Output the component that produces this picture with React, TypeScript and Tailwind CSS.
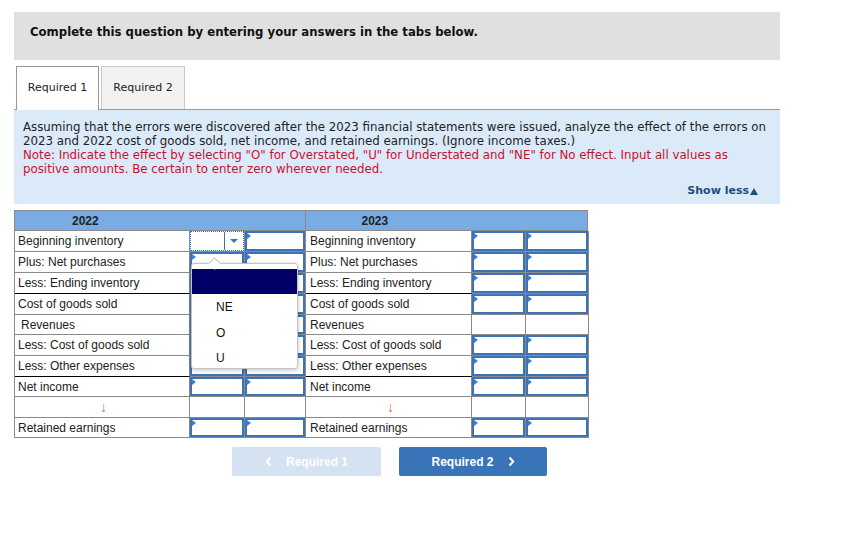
import React from "react";

const verdana = { fontFamily: '"DejaVu Sans", Verdana, sans-serif' };
const arial = { fontFamily: '"Liberation Sans", Arial, sans-serif' };

type Row = {
  left: string;
  right: string;
  h: string;
  leftInputs: boolean;
  rightInputs: boolean;
  blackBottom?: boolean;
  arrow?: boolean;
  indentLeft?: boolean;
};

const rows: Row[] = [
  { left: "Beginning inventory", right: "Beginning inventory", h: "h-[21px]", leftInputs: true, rightInputs: true },
  { left: "Plus: Net purchases", right: "Plus: Net purchases", h: "h-[21px]", leftInputs: true, rightInputs: true },
  { left: "Less: Ending inventory", right: "Less: Ending inventory", h: "h-[21px]", leftInputs: true, rightInputs: true, blackBottom: true },
  { left: "Cost of goods sold", right: "Cost of goods sold", h: "h-[21px]", leftInputs: true, rightInputs: true },
  { left: "Revenues", right: "Revenues", h: "h-[20px]", leftInputs: true, rightInputs: false, indentLeft: true },
  { left: "Less: Cost of goods sold", right: "Less: Cost of goods sold", h: "h-[21px]", leftInputs: true, rightInputs: true },
  { left: "Less: Other expenses", right: "Less: Other expenses", h: "h-[21px]", leftInputs: true, rightInputs: true, blackBottom: true },
  { left: "Net income", right: "Net income", h: "h-[20px]", leftInputs: true, rightInputs: true },
  { left: "", right: "", h: "h-[21px]", leftInputs: false, rightInputs: false, arrow: true },
  { left: "Retained earnings", right: "Retained earnings", h: "h-[20px]", leftInputs: true, rightInputs: true },
];

function Marker() {
  return (
    <span className="absolute left-0 top-0 h-0 w-0 border-y-[3px] border-l-[4px] border-y-transparent border-l-[#3b80d6]" />
  );
}

function InputBox() {
  return (
    <div className="relative h-full w-full border-2 border-[#3c72b6] bg-white">
      <Marker />
    </div>
  );
}

function SelectBox() {
  return (
    <div className="flex h-full w-full border border-dotted border-[#3c72b6] bg-white">
      <div className="flex-1" />
      <div className="flex w-[19px] items-center justify-center border-l border-[#3c72b6]">
        <span className="h-0 w-0 border-x-[4px] border-t-[4px] border-x-transparent border-t-[#3c72b6]" />
      </div>
    </div>
  );
}

function Cell({ w, children, className = "" }: { w: string; children?: React.ReactNode; className?: string }) {
  return (
    <div className={`${w} h-full shrink-0 border-r border-b border-[#8a8a8a] ${className}`}>
      {children}
    </div>
  );
}

function Chevron({ dir }: { dir: "left" | "right" }) {
  return (
    <svg width="7" height="11" viewBox="0 0 7 11" fill="none">
      <path
        d={dir === "left" ? "M5.5 1.5 L1.8 5.5 L5.5 9.5" : "M1.5 1.5 L5.2 5.5 L1.5 9.5"}
        stroke="white"
        strokeWidth="2"
      />
    </svg>
  );
}

function Dropdown() {
  return (
    <div
      className="absolute left-[176px] top-[52px] h-[106px] w-[107px] rounded-[3px] border border-[#c4c4c4] bg-white shadow-[0_1px_4px_rgba(0,0,0,0.25)]"
      style={arial}
    >
      <span className="absolute -top-[5px] left-[18px] h-[9px] w-[9px] rotate-45 border-l border-t border-[#c4c4c4] bg-white" />
      <div className="mt-[5px] h-[25px] bg-[#000066]" />
      <div className="flex h-[26px] items-center pl-[24px] text-[12px] text-[#111]">NE</div>
      <div className="flex h-[25px] items-center pl-[24px] text-[12px] text-[#111]">O</div>
      <div className="flex h-[25px] items-center pl-[24px] text-[12px] text-[#111]">U</div>
    </div>
  );
}

export default function App() {
  return (
    <div className="min-h-[537px] w-[866px] bg-white pl-[14px] pt-[12px]">
      <div className="h-[48px] w-[766px] bg-[#e0e0e0] pl-[16px] pt-[12px]">
        <p className="text-[11.7px] font-bold leading-[16px] text-[#111]" style={verdana}>
          Complete this question by entering your answers in the tabs below.
        </p>
      </div>

      <div className="mt-[6px] flex h-[44px] w-[766px] items-end border-b border-[#999]">
        <div
          className="-mb-px ml-[2px] flex h-[44px] w-[83px] items-center justify-center border border-b-0 border-[#999] bg-white text-[11px] text-[#222]"
          style={verdana}
        >
          Required 1
        </div>
        <div
          className="ml-[2px] flex h-[43px] w-[84px] items-center justify-center border border-b-0 border-[#c8c8c8] bg-[#f2f2f2] text-[11px] text-[#222]"
          style={verdana}
        >
          Required 2
        </div>
      </div>

      <div className="relative h-[94px] w-[766px] bg-[#dbeaf8] px-[9px] pt-[10px] text-[11.8px] leading-[14px]" style={verdana}>
        <p className="text-[#222]">
          Assuming that the errors were discovered after the 2023 financial statements were issued, analyze the effect of the errors on 2023 and 2022 cost of goods sold, net income, and retained earnings. (Ignore income taxes.)
        </p>
        <p className="text-[#c8102e]">
          Note: Indicate the effect by selecting "O" for Overstated, "U" for Understated and "NE" for No effect. Input all values as
          <br />
          positive amounts. Be certain to enter zero wherever needed.
        </p>
        <div className="absolute bottom-[6px] right-[22px] flex items-center text-[11px] font-bold text-[#1f4e7a]">
          Show less
          <span className="ml-[1px] h-0 w-0 border-x-[4px] border-b-[7px] border-x-transparent border-b-[#1f4e7a]" />
        </div>
      </div>

      <div className="relative mt-[6px] w-[574px] border-l border-t border-[#8a8a8a] text-[12px] text-[#222]" style={arial}>
        <div className="flex h-[20px] bg-[#78ace3] font-bold">
          <div className="h-full w-[291px] border-r border-b border-[#8a8a8a] pl-[57px] leading-[20px]">2022</div>
          <div className="h-full w-[283px] border-r border-b border-[#8a8a8a] pl-[56px] leading-[20px]">2023</div>
        </div>
        {rows.map((r, i) => (
          <div key={i} className={`flex ${r.h}`}>
            <Cell
              w="w-[175px]"
              className={`flex items-center ${r.indentLeft ? "pl-[6px]" : "pl-[3px]"} ${r.blackBottom ? "border-b-black" : ""} ${r.arrow ? "justify-center pl-0" : ""}`}
            >
              {r.arrow ? <span className="text-[14px] text-[#5a8fd6]">↓</span> : r.left}
            </Cell>
            <Cell w="w-[55px]">{r.leftInputs ? i === 0 ? <SelectBox /> : <InputBox /> : null}</Cell>
            <Cell w="w-[61px]">{r.leftInputs ? <InputBox /> : null}</Cell>
            <Cell
              w="w-[166px]"
              className={`flex items-center pl-[4px] ${r.blackBottom ? "border-b-black" : ""} ${r.arrow ? "justify-center pl-0" : ""}`}
            >
              {r.arrow ? <span className="text-[14px] text-[#e0702a]">↓</span> : r.right}
            </Cell>
            <Cell w="w-[54px]">{r.rightInputs ? <InputBox /> : null}</Cell>
            <Cell w="w-[63px]">{r.rightInputs ? <InputBox /> : null}</Cell>
          </div>
        ))}
        <Dropdown />
      </div>

      <div className="ml-[218px] mt-[9px] flex gap-[18px] text-[12px] font-bold text-white" style={arial}>
        <div className="flex h-[29px] w-[149px] items-center justify-center gap-[14px] rounded-[2px] bg-[#d5e2f1]">
          <Chevron dir="left" />
          <span>Required 1</span>
        </div>
        <div className="flex h-[29px] w-[148px] items-center justify-center gap-[14px] rounded-[2px] bg-[#3a74b8]">
          <span>Required 2</span>
          <Chevron dir="right" />
        </div>
      </div>
    </div>
  );
}
